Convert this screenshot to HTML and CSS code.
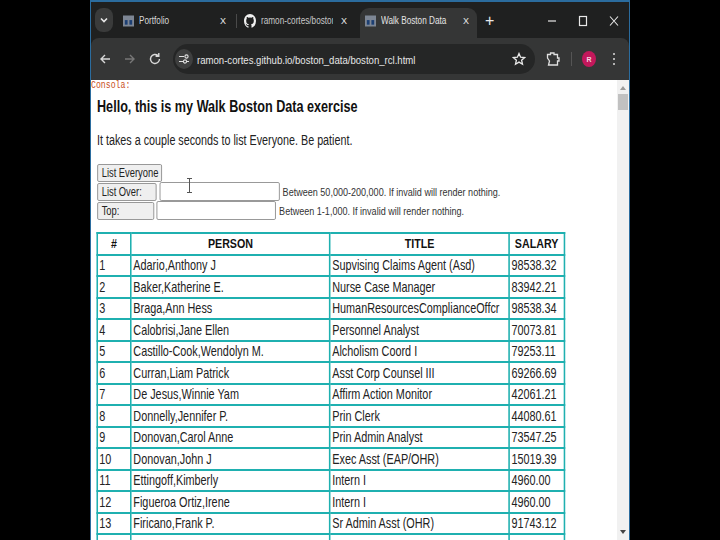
FILE: index.html
```html
<!DOCTYPE html>
<html>
	<head>
		<title>Walk Boston Data</title>
		<link rel="stylesheet" href="styles.css">
	</head>
	<body>
		<div class="window">
			<div class="tabBar">
				<div class="tabMenu">
					<svg width="10" height="10" viewBox="0 0 10 10"><path d="M2 3.5 L5 6.5 L8 3.5" fill="none" stroke="#e8e8e8" stroke-width="1.6"/></svg>
				</div>
				<div class="tab">
					<svg class="favicon" width="11" height="12" viewBox="0 0 12 12"><rect width="12" height="12" fill="#7d8694"/><rect x="2" y="5" width="3" height="5" fill="#1c3f73"/><rect x="7" y="5" width="3" height="5" fill="#1c3f73"/></svg>
					<span class="tabTitle"><span class="squeeze">Portfolio</span></span>
					<span class="tabClose">X</span>
				</div>
				<div class="tabDivider"></div>
				<div class="tab tabGit">
					<svg class="favicon" width="12" height="14" viewBox="0 0 16 16" preserveAspectRatio="none"><path fill="#f0f0f0" d="M8 0C3.58 0 0 3.58 0 8c0 3.54 2.29 6.53 5.47 7.59.4.07.55-.17.55-.38v-1.34c-2.23.49-2.69-1.07-2.69-1.07-.36-.92-.89-1.17-.89-1.17-.73-.5.05-.49.05-.49.8.06 1.23.83 1.23.83.71 1.22 1.87.87 2.33.66.07-.52.28-.87.5-1.07-1.78-.2-3.64-.89-3.64-3.95 0-.87.31-1.59.82-2.15-.08-.2-.36-1.02.08-2.12 0 0 .67-.21 2.2.82a7.6 7.6 0 0 1 4 0c1.53-1.04 2.2-.82 2.2-.82.44 1.1.16 1.92.08 2.12.51.56.82 1.27.82 2.15 0 3.07-1.87 3.75-3.65 3.95.29.25.54.73.54 1.48v2.2c0 .21.15.46.55.38A8 8 0 0 0 16 8c0-4.42-3.58-8-8-8z"/></svg>
					<span class="tabTitle tabFade"><span class="squeeze">ramon-cortes/boston</span></span>
					<span class="tabClose">X</span>
				</div>
				<div class="tab tabActive">
					<svg class="favicon" width="11" height="12" viewBox="0 0 12 12"><rect width="12" height="12" fill="#7d8694"/><rect x="2" y="5" width="3" height="5" fill="#1c3f73"/><rect x="7" y="5" width="3" height="5" fill="#1c3f73"/></svg>
					<span class="tabTitle"><span class="squeeze">Walk Boston Data</span></span>
					<span class="tabClose">X</span>
				</div>
				<span class="newTab">+</span>
				<div class="winControls">
					<svg width="12" height="12" viewBox="0 0 12 12"><path d="M2 6 H10" stroke="#e8e8e8" stroke-width="1.2"/></svg>
					<svg width="12" height="12" viewBox="0 0 12 12"><rect x="2.5" y="1.5" width="7" height="9" fill="none" stroke="#e8e8e8" stroke-width="1.2"/></svg>
					<svg width="12" height="12" viewBox="0 0 12 12"><path d="M2 1.5 L10 10.5 M10 1.5 L2 10.5" stroke="#e8e8e8" stroke-width="1.1"/></svg>
				</div>
			</div>
			<div class="toolBar">
				<svg class="navIcon" width="14" height="14" viewBox="0 0 14 14"><path d="M12 7 H3 M7 3 L3 7 L7 11" fill="none" stroke="#d8d8d8" stroke-width="1.4"/></svg>
				<svg class="navIcon" width="14" height="14" viewBox="0 0 14 14"><path d="M2 7 H11 M7 3 L11 7 L7 11" fill="none" stroke="#777" stroke-width="1.4"/></svg>
				<svg class="navIcon" width="14" height="14" viewBox="0 0 14 14"><path d="M11.5 7 A4.5 4.5 0 1 1 10 3.6 M10.8 1 V4.2 H7.6" fill="none" stroke="#d8d8d8" stroke-width="1.4"/></svg>
				<div class="omnibox">
					<span class="siteInfo">
						<svg width="12" height="12" viewBox="0 0 12 12"><path d="M1 3.5 H6 M9 8.5 H11 M1 8.5 H5" stroke="#e0e0e0" stroke-width="1.2"/><circle cx="8.5" cy="3.5" r="1.6" fill="none" stroke="#e0e0e0" stroke-width="1.1"/><circle cx="7" cy="8.5" r="1.6" fill="none" stroke="#e0e0e0" stroke-width="1.1"/></svg>
					</span>
					<span class="url"><span class="squeeze">ramon-cortes.github.io/boston_data/boston_rcl.html</span></span>
					<svg class="star" width="14" height="14" viewBox="0 0 14 14"><path d="M7 1.5 L8.6 5.2 L12.6 5.6 L9.6 8.2 L10.5 12.2 L7 10.1 L3.5 12.2 L4.4 8.2 L1.4 5.6 L5.4 5.2 Z" fill="none" stroke="#e8e8e8" stroke-width="1.3"/></svg>
				</div>
				<svg class="extIcon" width="14" height="16" viewBox="0 0 14 16"><path d="M1.5 3.5 H4.5 V2 H8 V3.5 H11.5 V7 H13 V10 H11.5 V14 H2.5 L3.5 10 L1.5 7 Z" fill="none" stroke="#e0e0e0" stroke-width="1.3"/></svg>
				<div class="toolDivider"></div>
				<span class="avatar">R</span>
				<span class="dots"><i></i><i></i><i></i></span>
			</div>
			<div class="viewport">
				<div class="page">
					<div class="sheet">
						<div class="consola">Consola:</div>
						<div class="content">
							<h3 class="title">Hello, this is my Walk Boston Data exercise</h3>
							<p class="intro">It takes a couple seconds to list Everyone. Be patient.</p>
							<div class="formRow"><button class="btn">List Everyone</button></div>
							<div class="formRow"><button class="btn btnOver">List Over:</button><input class="field" type="text"><span class="hint">Between 50,000-200,000. If invalid will render nothing.</span></div>
							<div class="formRow"><button class="btn btnTop">Top:</button><input class="field" type="text"><span class="hint">Between 1-1,000. If invalid will render nothing.</span></div>
							<table class="people">
								<thead>
									<tr><th class="colNum">#</th><th class="colPerson">PERSON</th><th class="colTitle">TITLE</th><th class="colSalary">SALARY</th></tr>
								</thead>
								<tbody>
									<tr><td>1</td><td>Adario,Anthony J</td><td>Supvising Claims Agent (Asd)</td><td>98538.32</td></tr>
									<tr><td>2</td><td>Baker,Katherine E.</td><td>Nurse Case Manager</td><td>83942.21</td></tr>
									<tr><td>3</td><td>Braga,Ann Hess</td><td>HumanResourcesComplianceOffcr</td><td>98538.34</td></tr>
									<tr><td>4</td><td>Calobrisi,Jane Ellen</td><td>Personnel Analyst</td><td>70073.81</td></tr>
									<tr><td>5</td><td>Castillo-Cook,Wendolyn M.</td><td>Alcholism Coord I</td><td>79253.11</td></tr>
									<tr><td>6</td><td>Curran,Liam Patrick</td><td>Asst Corp Counsel III</td><td>69266.69</td></tr>
									<tr><td>7</td><td>De Jesus,Winnie Yam</td><td>Affirm Action Monitor</td><td>42061.21</td></tr>
									<tr><td>8</td><td>Donnelly,Jennifer P.</td><td>Prin Clerk</td><td>44080.61</td></tr>
									<tr><td>9</td><td>Donovan,Carol Anne</td><td>Prin Admin Analyst</td><td>73547.25</td></tr>
									<tr><td>10</td><td>Donovan,John J</td><td>Exec Asst (EAP/OHR)</td><td>15019.39</td></tr>
									<tr><td>11</td><td>Ettingoff,Kimberly</td><td>Intern I</td><td>4960.00</td></tr>
									<tr><td>12</td><td>Figueroa Ortiz,Irene</td><td>Intern I</td><td>4960.00</td></tr>
									<tr><td>13</td><td>Firicano,Frank P.</td><td>Sr Admin Asst (OHR)</td><td>91743.12</td></tr>
									<tr><td></td><td></td><td></td><td></td></tr>
								</tbody>
							</table>
						</div>
					</div>
					<svg class="ibeam" width="5" height="15" viewBox="0 0 5 15"><path d="M0 .5 H5 M0 14.5 H5 M2.5 .5 V14.5" fill="none" stroke="#555" stroke-width="1"/></svg>
				</div>
				<div class="scrollbar">
					<svg width="8" height="6" viewBox="0 0 8 6"><path d="M4 1 L7 5 H1 Z" fill="#9a9a9a"/></svg>
					<div class="thumb"></div>
					<svg class="arrowDown" width="8" height="6" viewBox="0 0 8 6"><path d="M1 1 H7 L4 5 Z" fill="#444"/></svg>
				</div>
			</div>
		</div>
	</body>
</html>
```

FILE: styles.css
```css
/* the whole capture is squashed sideways, no narrow font is installed so scale the text */
* {box-sizing: border-box;}
html, body {height: 100%;}
body {
	margin: 0;
	background: #000;
	overflow: hidden;
	font-family: "Liberation Sans", Arial, sans-serif;
	display: flex;
	justify-content: center;
}
.squeeze {
	display: inline-block;
	white-space: nowrap;
	transform: scaleX(.82);
	transform-origin: left center;
}
.window {
	width: 540px;
	height: 540px;
	display: flex;
	flex-direction: column;
	background: #1f2020;
	border-top: 2px solid #2b6c9e;
	border-left: 1px solid #2b6c9e;
	border-right: 1px solid #2b6c9e;
	overflow: hidden;
}
.tabBar {
	height: 36px;
	flex: none;
	display: flex;
	align-items: flex-start;
	color: #d8d8d8;
	font-size: 10px;
	padding-top: 6px;
}
.tabMenu {
	width: 18px;
	height: 24px;
	margin-left: 4px;
	border-radius: 8px;
	background: #3a3b3b;
	display: flex;
	align-items: center;
	justify-content: center;
}
.tab {
	display: flex;
	align-items: center;
	height: 25px;
	width: 123px;
	padding: 0 2px 0 10px;
	flex: none;
}
.favicon {flex: none; margin-right: 5px;}
.tabTitle {flex: 1; min-width: 0; white-space: nowrap; overflow: hidden;}
.tabFade {color: #c8c8c8;}
.tabClose {width: 22px; flex: none; text-align: center; font-size: 9px; color: #e8e8e8;}
.tabDivider {width: 1px; height: 14px; margin-top: 6px; background: #4a4a4a; flex: none;}
.tabGit {padding: 0 5px 0 7px;}
.tabActive {
	width: 117px;
	height: 30px;
	background: #353636;
	border-radius: 9px 9px 0 0;
	padding: 0 0 5px 5px;
	color: #e4e4e4;
}
.newTab {font-size: 16px; line-height: 25px; color: #e8e8e8; margin-left: 8px;}
.winControls {
	margin-left: auto;
	height: 25px;
	display: flex;
	align-items: center;
	gap: 19px;
	padding-right: 9px;
}
.toolBar {
	height: 42px;
	flex: none;
	background: #353636;
	border-radius: 8px 8px 0 0;
	display: flex;
	align-items: center;
	padding-left: 7px;
}
.navIcon {margin-right: 11px; flex: none;}
.omnibox {
	width: 362px;
	height: 30px;
	border-radius: 15px;
	background: #252626;
	display: flex;
	align-items: center;
	padding-left: 2px;
	flex: none;
}
.siteInfo {
	width: 18px;
	height: 20px;
	border-radius: 50%;
	background: #3e3f3f;
	display: flex;
	align-items: center;
	justify-content: center;
	flex: none;
}
.url {
	color: #e6e6e6;
	font-size: 11.7px;
	margin-left: 4px;
	flex: 1;
	min-width: 0;
	white-space: nowrap;
}
.star {margin-right: 9px; flex: none;}
.extIcon {margin-left: 11px; flex: none;}
.toolDivider {width: 1px; height: 14px; background: #555; margin-left: 11px; flex: none;}
.avatar {
	width: 14px;
	height: 16px;
	border-radius: 50%;
	background: #c2185b;
	color: #f4d5e0;
	font-size: 7px;
	font-weight: bold;
	display: flex;
	align-items: center;
	justify-content: center;
	margin-left: 10px;
	flex: none;
}
.dots {display: flex; flex-direction: column; gap: 3px; margin-left: 17px;}
.dots i {width: 2px; height: 2px; background: #ddd; border-radius: 50%;}
.viewport {
	flex: 1;
	min-height: 0;
	display: flex;
	background: #fff;
}
.page {flex: 1; min-width: 0; position: relative; overflow: hidden;}
/* widths below are before the .78 squeeze */
.sheet {
	width: 675px;
	transform: scaleX(.78);
	transform-origin: left top;
}
.consola {
	font-family: "Liberation Mono", monospace;
	font-size: 10.5px;
	line-height: 11px;
	color: #c9501e;
}
.content {padding: 0 7.7px; color: #222;}
.title {
	margin: 5px 0 0;
	font-size: 16.2px;
	line-height: 20px;
	font-weight: bold;
	color: #111;
}
.intro {
	margin: 16px 0 13px;
	font-size: 13.8px;
	line-height: 18px;
}
.formRow {
	display: flex;
	align-items: center;
	height: 19px;
}
.btn {
	height: 18px;
	padding: 0 0 0 5px;
	border: 1px solid #8c8c8c;
	border-radius: 2px;
	background: #efefef;
	color: #222;
	font-family: inherit;
	font-size: 12px;
	text-align: left;
	width: 83px;
}
.btnOver {width: 76.7px;}
.btnTop {width: 73.6px;}
.field {
	width: 153.5px;
	height: 19px;
	margin-left: 3.9px;
	border: 1px solid #8c8c8c;
	border-radius: 2px;
	background: #fff;
	padding: 0;
}
.btnTop + .field {margin-left: 2.5px;}
.hint {
	font-size: 11.6px;
	margin-left: 3.9px;
	white-space: nowrap;
	color: #333;
}
.people {
	margin: 12px 0 0 -1px;
	width: 599px;
	table-layout: fixed;
	border-collapse: collapse;
	border: 2px solid #1fb0b0;
	font-size: 13.9px;
}
.people th, .people td {
	border: 2px solid #1fb0b0;
	padding: 0 2px;
	height: 21.5px;
	white-space: nowrap;
	overflow: hidden;
}
.people th {color: #111; font-weight: bold; font-size: 13.7px;}
.colNum {width: 43.6px;}
.colPerson {width: 255px;}
.colTitle {width: 229.7px;}
.colSalary {width: 70.7px;}
.ibeam {position: absolute; left: 96px; top: 98px;}
.scrollbar {
	width: 12px;
	flex: none;
	background: #f1f1f1;
	display: flex;
	flex-direction: column;
	align-items: center;
	padding: 5px 0 5px;
}
.thumb {width: 10px; height: 16px; background: #c1c1c1; margin-top: 3px;}
.arrowDown {margin-top: auto;}
```
